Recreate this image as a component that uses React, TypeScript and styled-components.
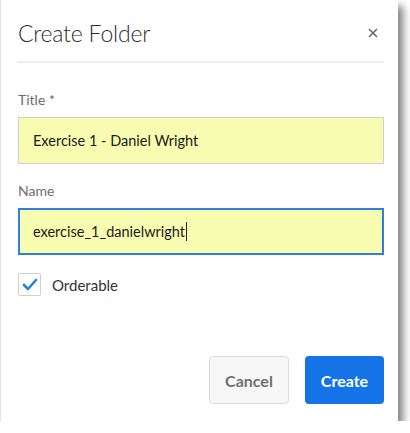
import React from "react";
import styled, { createGlobalStyle } from "styled-components";

const Global = createGlobalStyle`
  html, body { margin: 0; padding: 0; background: #fff; }
  body { font-family: Lato, "Noto Sans", sans-serif; }
`;

const Dialog = styled.div`
  box-sizing: border-box;
  width: 398px;
  height: 421px;
  background: #fff;
  border-left: 1px solid #e4e4e4;
  box-shadow: 5px 6px 8px rgba(0, 0, 0, 0.5);
  padding: 0 14px 0 17px;
  display: flex;
  flex-direction: column;
`;

const Header = styled.div`
  display: flex;
  align-items: center;
  justify-content: space-between;
  height: 63px;
  border-bottom: 2px solid #ececec;
  box-sizing: border-box;
  padding-top: 4px;
`;

const Heading = styled.h1`
  margin: 0;
  font-family: Lato, sans-serif;
  font-weight: 300;
  font-size: 23px;
  color: #2c2c2c;
  letter-spacing: -0.2px;
`;

const Close = styled.button`
  border: none;
  background: none;
  padding: 0;
  margin-right: 5px;
  width: 12px;
  height: 12px;
  display: flex;
  align-items: center;
  justify-content: center;
  cursor: pointer;
`;

const Body = styled.div`
  display: flex;
  flex-direction: column;
  padding-top: 28px;
  flex: 1;
`;

const Label = styled.label`
  font-size: 14px;
  color: #6e6e6e;
  line-height: 18px;
  margin-bottom: 8px;
`;

const Input = styled.div<{ $focused?: boolean }>`
  box-sizing: border-box;
  height: 47px;
  background: #f8fcb1;
  border: ${(p) => (p.$focused ? "2px solid #2d7fe0" : "1px solid #cfcfcf")};
  padding-left: ${(p) => (p.$focused ? 13 : 14)}px;
  display: flex;
  align-items: center;
  font-size: 14.5px;
  color: #1a1a1a;
  margin-bottom: 18px;
`;

const Caret = styled.span`
  display: inline-block;
  width: 1px;
  height: 19px;
  background: #222;
  margin-left: 1px;
`;

const CheckRow = styled.div`
  display: flex;
  align-items: center;
  gap: 11px;
`;

const Box = styled.span`
  box-sizing: border-box;
  width: 23px;
  height: 23px;
  border: 1px solid #d0d0d0;
  border-radius: 2px;
  display: flex;
  align-items: center;
  justify-content: center;
  background: #fff;
`;

const CheckLabel = styled.span`
  font-size: 15px;
  color: #333;
`;

const Footer = styled.div`
  display: flex;
  justify-content: flex-end;
  gap: 16px;
  padding-bottom: 17px;
`;

const Button = styled.button<{ $primary?: boolean }>`
  box-sizing: border-box;
  height: 48px;
  border-radius: 4px;
  font-family: Lato, sans-serif;
  font-size: 16px;
  font-weight: 700;
  padding: 0;
  width: ${(p) => (p.$primary ? 79 : 80)}px;
  background: ${(p) => (p.$primary ? "#1473e6" : "#f7f7f7")};
  color: ${(p) => (p.$primary ? "#fff" : "#6f6f6f")};
  border: ${(p) => (p.$primary ? "none" : "1px solid #dcdcdc")};
`;

export default function App() {
  return (
    <>
      <Global />
      <Dialog>
        <Header>
          <Heading>Create Folder</Heading>
          <Close aria-label="Close">
            <svg width="10" height="10" viewBox="0 0 10 10">
              <path d="M1 1L9 9M9 1L1 9" stroke="#666" strokeWidth="1.6" />
            </svg>
          </Close>
        </Header>
        <Body>
          <Label>Title *</Label>
          <Input>Exercise 1 - Daniel Wright</Input>
          <Label>Name</Label>
          <Input $focused>
            exercise_1_danielwright
            <Caret />
          </Input>
          <CheckRow>
            <Box>
              <svg width="16" height="13" viewBox="0 0 16 13">
                <path d="M2 7L6 11L14 2" fill="none" stroke="#2b7fe0" strokeWidth="2.6" strokeLinecap="round" strokeLinejoin="round" />
              </svg>
            </Box>
            <CheckLabel>Orderable</CheckLabel>
          </CheckRow>
        </Body>
        <Footer>
          <Button>Cancel</Button>
          <Button $primary>Create</Button>
        </Footer>
      </Dialog>
    </>
  );
}
